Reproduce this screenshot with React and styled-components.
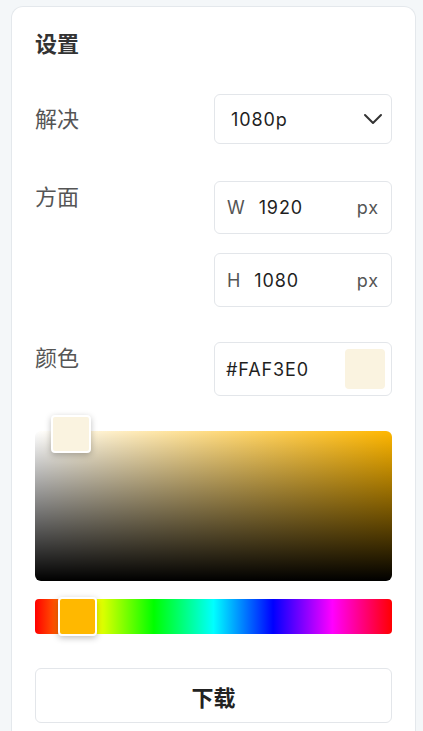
import styled, { createGlobalStyle } from 'styled-components';

const GlobalStyle = createGlobalStyle`
    body {
        margin: 0;
        background: #f4f7f9;
        font-family: "Inter", "Noto Sans CJK SC", sans-serif;
    }
`;

const Card = styled.div`
    width: 405px;
    margin: 6px 0 0 11px;
    padding: 22px 23px 24px 23px;
    background: #ffffff;
    border: 1px solid #e4e8ec;
    border-bottom: none;
    border-radius: 12px 12px 0 0;
    display: flex;
    flex-direction: column;
    box-sizing: border-box;
    min-height: 725px;
`;

const Title = styled.div`
    font-family: "Noto Sans CJK SC", sans-serif;
    font-size: 22px;
    line-height: 26px;
    font-weight: 700;
    color: #333333;
    margin-bottom: 39px;
`;

const Row = styled.div`
    display: flex;
    justify-content: space-between;
    align-items: ${props => (props.$center ? 'center' : 'flex-start')};
    margin-bottom: ${props => props.$gap}px;
`;

const Label = styled.div`
    font-family: "Noto Sans CJK SC", sans-serif;
    font-size: 22px;
    line-height: 28px;
    padding-bottom: ${props => (props.$lift ? 4 : 0)}px;
    color: #555555;
`;

const Stack = styled.div`
    display: flex;
    flex-direction: column;
    gap: 19px;
`;

const Box = styled.div`
    width: 178px;
    height: ${props => props.$h}px;
    box-sizing: border-box;
    border: 1px solid #e3e6ea;
    border-radius: 6px;
    background: #ffffff;
    display: flex;
    align-items: center;
    padding: 0 12px;
    font-size: 18px;
    letter-spacing: 0.9px;
    color: #1f1f1f;
`;

const SelectBox = styled(Box)`
    padding: 0 8px 0 16px;
    justify-content: space-between;
`;

const Prefix = styled.span`
    color: #555555;
    margin-right: 13px;
`;

const Value = styled.span`
    flex: 1;
`;

const Unit = styled.span`
    color: #555555;
`;

const ColorBox = styled(Box)`
    padding: 0 6px 0 11px;
    justify-content: space-between;
`;

const Swatch = styled.div`
    width: 40px;
    height: 40px;
    border-radius: 4px;
    background: ${props => props.$color};
`;

const Picker = styled.div`
    position: relative;
    height: 150px;
    border-radius: 6px;
    margin-bottom: 18px;
    background: linear-gradient(to top, #000000, rgba(0, 0, 0, 0)),
        linear-gradient(to right, #ffffff, hsl(43, 100%, 50%));
`;

const Hue = styled.div`
    position: relative;
    height: 35px;
    border-radius: 4px;
    margin-bottom: 34px;
    background: linear-gradient(
        to right,
        #ff0000 0%,
        #ffff00 16.7%,
        #00ff00 33.3%,
        #00ffff 50%,
        #0000ff 66.7%,
        #ff00ff 83.3%,
        #ff0000 100%
    );
`;

const Handle = styled.div`
    position: absolute;
    left: ${props => props.$left}px;
    top: ${props => props.$top}px;
    width: ${props => props.$w}px;
    height: ${props => props.$h}px;
    box-sizing: border-box;
    border: 2px solid #ffffff;
    border-radius: 4px;
    background: ${props => props.$color};
    box-shadow: 0 2px 6px rgba(0, 0, 0, 0.25);
`;

const Button = styled.button`
    height: 55px;
    border: 1px solid #e3e6ea;
    border-radius: 6px;
    background: #ffffff;
    font-family: "Noto Sans CJK SC", sans-serif;
    font-size: 22px;
    font-weight: 700;
    color: #222222;
    cursor: pointer;
`;

function Chevron() {
    return (
        <svg width="20" height="12" viewBox="0 0 20 12" fill="none">
            <path d="M2 2 L10 10 L18 2" stroke="#333" strokeWidth="2" strokeLinecap="round" strokeLinejoin="round" />
        </svg>
    );
}

export default function App() {
    const color = '#FAF3E0';
    return (
        <>
            <GlobalStyle />
            <Card>
                <Title>设置</Title>
                <Row $center $gap={37}>
                    <Label $lift>解决</Label>
                    <SelectBox $h={50}>
                        <span>1080p</span>
                        <Chevron />
                    </SelectBox>
                </Row>
                <Row $gap={35}>
                    <Label>方面</Label>
                    <Stack>
                        <Box $h={53}>
                            <Prefix>W</Prefix>
                            <Value>1920</Value>
                            <Unit>px</Unit>
                        </Box>
                        <Box $h={54}>
                            <Prefix>H</Prefix>
                            <Value>1080</Value>
                            <Unit>px</Unit>
                        </Box>
                    </Stack>
                </Row>
                <Row $gap={35}>
                    <Label>颜色</Label>
                    <ColorBox $h={54}>
                        <span>{color}</span>
                        <Swatch $color={color} />
                    </ColorBox>
                </Row>
                <Picker>
                    <Handle $left={16} $top={-16} $w={40} $h={38} $color={color} />
                </Picker>
                <Hue>
                    <Handle $left={23} $top={-2} $w={39} $h={39} $color="#ffb800" />
                </Hue>
                <Button>下载</Button>
            </Card>
        </>
    );
}
